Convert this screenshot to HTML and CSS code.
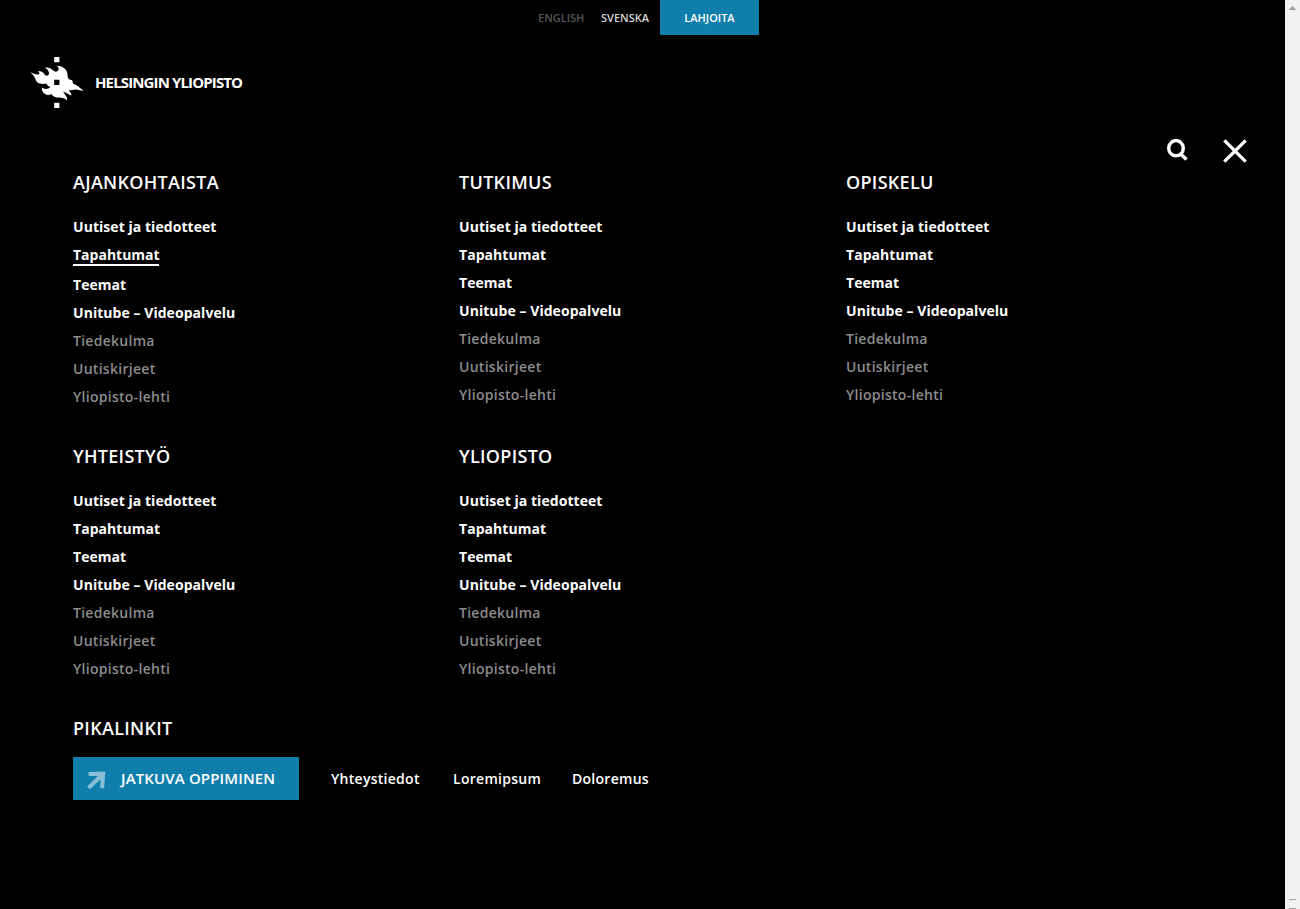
FILE: index.html
```html
<!DOCTYPE html>
<html lang="fi">
<head>
<meta charset="utf-8">
<title>Helsingin yliopisto</title>
<link rel="stylesheet" href="styles.css">
</head>
<body>
<div class="page">
  <nav class="topbar">
    <a class="lang lang-muted">ENGLISH</a>
    <a class="lang">SVENSKA</a>
    <a class="donate">LAHJOITA</a>
  </nav>
  <header class="brand">
    <svg class="flame" width="54" height="52" viewBox="0 0 54 52">
      <path fill="#fff" d="M24.2 0h5.2v5.2h-5.2zM24.2 45.8h5.2v5.2h-5.2z"/>
      <path fill="#fff" fill-rule="evenodd" d="M0 15.3C3 16 5.5 17.8 8.3 17.6C10 17.2 9.6 15.4 7.8 14C11.5 14 13.5 15.5 15 18C16.5 19.6 19.2 18.6 19 16C18.6 13.4 17 11.8 14.6 10.6C19 10 21.5 12 24 14C26.5 15.6 29 14 28.6 11.6C28.3 10.2 27.6 9.4 26.4 8.8C32.5 8.8 36.5 12 37.4 16.5C37.8 19 37.2 20.6 39 22.2C40.5 23.2 42.3 22.4 42.6 24C42.2 26.6 44 27 46.5 28.3C49 29.8 51 32 53.8 33.8C50.5 33.6 48.5 32.6 46 32.4C43 32.4 41 33.4 38.8 33.2C39.5 35 41.8 36 41.4 38.6C39 37.8 36 35.5 33.4 34.8C33.8 37.4 38 39 37 43.6C35 41.4 32.5 40.6 29 40.6C25.5 40.6 22.8 39.6 21.5 37C19 38.6 15.5 38 13.5 35.8C12.2 34.2 11.8 32.4 11.8 30.8C14.5 32.4 18 32.4 20.5 30C18.5 29.8 17.6 28.5 16.5 26.8C13.5 27 9.2 27.4 7 25C5 22.4 4.8 18.6 0 15.3zM24.2 22.7h5.2v5.2h-5.2z"/>
    </svg>
    <span class="brand-name">HELSINGIN YLIOPISTO</span>
  </header>
  <div class="tools">
    <svg width="22" height="22" viewBox="0 0 22 22" fill="none" stroke="#fff"><ellipse cx="9" cy="9.2" rx="7.3" ry="7.6" stroke-width="3.4"/><path d="M13 14.5l6.5 6" stroke-width="3.5"/></svg>
    <svg class="close" width="24" height="24" viewBox="0 0 24 24" fill="none" stroke="#fff" stroke-width="3.3"><path d="M1.3 1.3l21.4 21.4M22.7 1.3L1.3 22.7"/></svg>
  </div>
  <main class="menu">
    <section class="group">
      <h2>AJANKOHTAISTA</h2>
      <ul><li>Uutiset ja tiedotteet</li><li><span class="current">Tapahtumat</span></li><li>Teemat</li><li>Unitube – Videopalvelu</li><li class="dim">Tiedekulma</li><li class="dim">Uutiskirjeet</li><li class="dim">Yliopisto-lehti</li></ul>
    </section>
    <section class="group">
      <h2>TUTKIMUS</h2>
      <ul><li>Uutiset ja tiedotteet</li><li>Tapahtumat</li><li>Teemat</li><li>Unitube – Videopalvelu</li><li class="dim">Tiedekulma</li><li class="dim">Uutiskirjeet</li><li class="dim">Yliopisto-lehti</li></ul>
    </section>
    <section class="group">
      <h2>OPISKELU</h2>
      <ul><li>Uutiset ja tiedotteet</li><li>Tapahtumat</li><li>Teemat</li><li>Unitube – Videopalvelu</li><li class="dim">Tiedekulma</li><li class="dim">Uutiskirjeet</li><li class="dim">Yliopisto-lehti</li></ul>
    </section>
    <section class="group">
      <h2>YHTEISTYÖ</h2>
      <ul><li>Uutiset ja tiedotteet</li><li>Tapahtumat</li><li>Teemat</li><li>Unitube – Videopalvelu</li><li class="dim">Tiedekulma</li><li class="dim">Uutiskirjeet</li><li class="dim">Yliopisto-lehti</li></ul>
    </section>
    <section class="group">
      <h2>YLIOPISTO</h2>
      <ul><li>Uutiset ja tiedotteet</li><li>Tapahtumat</li><li>Teemat</li><li>Unitube – Videopalvelu</li><li class="dim">Tiedekulma</li><li class="dim">Uutiskirjeet</li><li class="dim">Yliopisto-lehti</li></ul>
    </section>
  </main>
  <section class="quick">
    <h2>PIKALINKIT</h2>
    <div class="quick-row">
      <a class="cta"><svg width="19" height="19" viewBox="0 0 19 19"><path fill="#88bfd8" d="M1.5 1L18.3 0.5L17.2 17.3H13.2L13.6 8.2L3 18.3L0.2 15.6L10.8 5H1.7z"/></svg><span>JATKUVA OPPIMINEN</span></a>
      <a>Yhteystiedot</a>
      <a>Loremipsum</a>
      <a>Doloremus</a>
    </div>
  </section>
</div>
<aside class="scrollbar">
  <svg width="7" height="4" viewBox="0 0 7 4"><path fill="#a3a3a3" d="M3 0h1v1h1v1h1v1h1v1H0V3h1V2h1V1h1z"/></svg>
  <div class="grip"></div>
</aside>
</body>
</html>
```
FILE: styles.css
```css
* { box-sizing: border-box; }
body {
  margin: 0;
  height: 909px;
  display: flex;
  overflow: hidden;
  background: #000;
  color: #fff;
  font: 600 14px/28px "Open Sans", sans-serif;
}
.page { width: 1285px; }
.topbar {
  display: flex;
  height: 35px;
  padding-left: 538px;
  font-size: 11px;
  line-height: 35px;
}
.lang { width: 63px; color: #d5d5d5; }
.lang-muted { color: #555; }
.lang + .lang { width: 59px; }
.donate { width: 99px; background: #107eab; text-align: center; }
.brand {
  display: flex;
  height: 74px;
  padding: 22px 0 0 30px;
}
.brand-name {
  margin-left: 11px;
  font-size: 15px;
  font-weight: 700;
  line-height: 50px;
  letter-spacing: -0.87px;
}
.tools {
  display: flex;
  justify-content: flex-end;
  gap: 34px;
  height: 59px;
  padding: 30px 38px 0 0;
}
.close { margin-top: -0.5px; }
.menu {
  display: grid;
  grid-template-columns: 386px 387px 386px;
  grid-template-rows: 274px 272px;
  padding-left: 73px;
}
h2 {
  margin: 0;
  font-size: 18px;
  font-weight: 600;
  line-height: 28px;
  letter-spacing: 0.3px;
}
ul {
  margin: 17px 0 0;
  padding: 0;
  list-style: none;
  font-weight: 700;
  letter-spacing: 0.05px;
}
li { height: 28px; }
li:has(.current) { height: 30px; }
.current {
  display: inline-block;
  width: 86px;
  height: 25px;
  border-bottom: 2px solid #fff;
  letter-spacing: 0;
  vertical-align: top;
}
.dim { color: #8c8c8c; font-weight: 600; letter-spacing: 0.28px; }
.quick { padding-left: 73px; }
.quick-row {
  display: grid;
  grid-template-columns: 226px 90px 87px 76px;
  align-items: center;
  gap: 32px;
  height: 43px;
  margin-top: 15px;
  letter-spacing: 0.28px;
}
.cta {
  display: flex;
  gap: 15px;
  height: 43px;
  padding-left: 14px;
  background: #107eab;
  font-size: 15px;
  line-height: 42px;
  letter-spacing: 0.14px;
  white-space: nowrap;
}
.cta svg { margin-top: 14px; }
.scrollbar {
  display: flex;
  flex-direction: column;
  align-items: center;
  justify-content: space-between;
  width: 15px;
  padding-top: 6px;
  background: #f1f1f1;
}
.scrollbar svg { display: block; }
.grip {
  width: 7px;
  height: 10px;
  border: solid #a3a3a3;
  border-width: 1px 0;
}
```
